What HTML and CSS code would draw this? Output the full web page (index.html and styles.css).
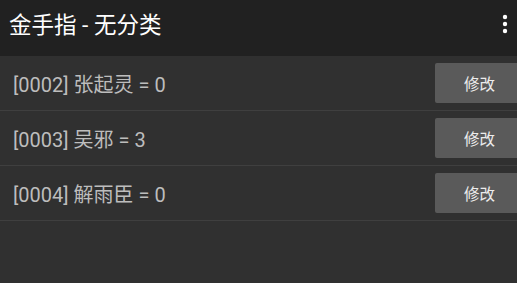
FILE: index.html
```html
<!DOCTYPE html>
<html lang="zh">
<head>
<meta charset="utf-8">
<title>金手指 - 无分类</title>
<link rel="stylesheet" href="styles.css">
</head>
<body>
<div class="app">
  <header class="toolbar">
    <span class="title">金手指 - 无分类</span>
    <span class="menu">
      <svg width="8" height="22" viewBox="0 0 8 22">
        <circle cx="4" cy="4" r="2.2" fill="#fff"/>
        <circle cx="4" cy="11" r="2.2" fill="#fff"/>
        <circle cx="4" cy="18" r="2.2" fill="#fff"/>
      </svg>
    </span>
  </header>
  <ul class="list">
    <li class="row"><span class="label">[0002] 张起灵 = 0</span><button class="btn">修改</button></li>
    <li class="row"><span class="label">[0003] 吴邪 = 3</span><button class="btn">修改</button></li>
    <li class="row"><span class="label">[0004] 解雨臣 = 0</span><button class="btn">修改</button></li>
  </ul>
</div>
</body>
</html>
```
FILE: styles.css
```css
html, body {
  margin: 0;
  padding: 0;
  background: #303030;
  width: 517px;
  height: 283px;
  overflow: hidden;
  font-family: Roboto, "Noto Sans CJK SC", sans-serif;
}
.app {
  display: flex;
  flex-direction: column;
  width: 517px;
}
.toolbar {
  height: 56px;
  background: #212121;
  display: flex;
  align-items: center;
  justify-content: space-between;
  padding: 0 8px 0 9px;
  box-sizing: border-box;
}
.title {
  color: #fff;
  font-size: 22.5px;
  margin-top: -11px;
}
.menu {
  display: flex;
  margin-top: -8px;
}
.list {
  list-style: none;
  margin: 0;
  padding: 0;
}
.row {
  height: 54px;
  border-bottom: 1.5px solid #3f3f3f;
  display: flex;
  align-items: center;
  justify-content: space-between;
  overflow: hidden;
  padding-left: 13px;
}
.label {
  color: #bdbdbd;
  font-size: 20px;
}
.btn {
  flex: 0 0 89px;
  height: 40px;
  margin-right: -7px;
  background: #5a5a5a;
  border: none;
  border-radius: 2px;
  color: #ececec;
  font-family: Roboto, "Noto Sans CJK SC", sans-serif;
  font-size: 15.5px;
  padding: 0;
}
```
